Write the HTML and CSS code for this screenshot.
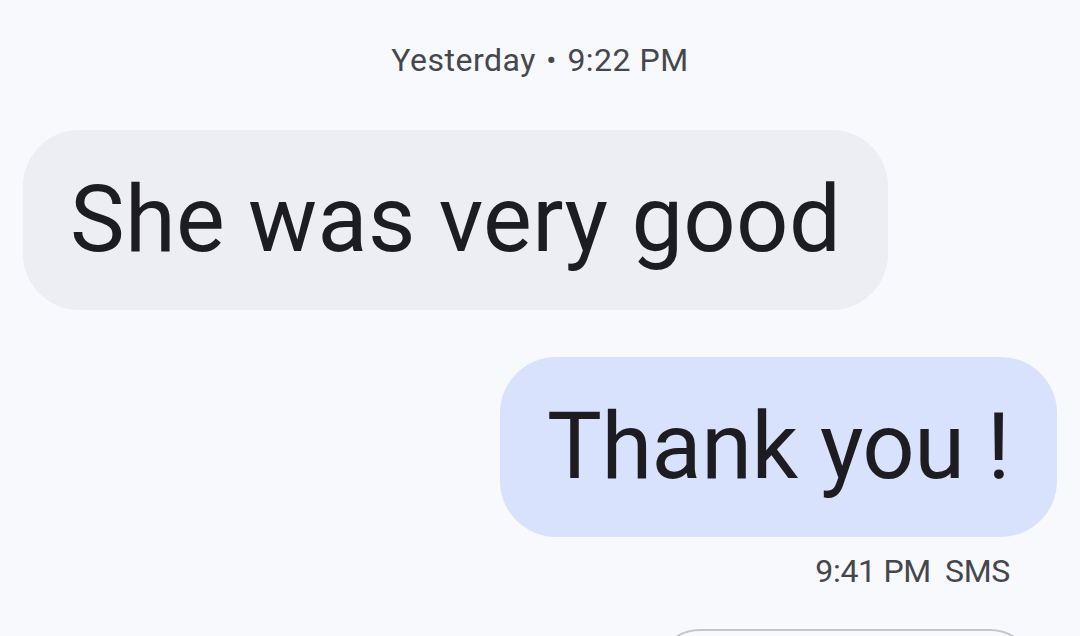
FILE: index.html
```html
<!DOCTYPE html>
<html lang="en">
<head>
  <meta charset="UTF-8">
  <meta name="viewport" content="width=device-width, initial-scale=1.0">
  <title>Messages</title>
  <link rel="stylesheet" href="styles.css">
</head>
<body>
  <div class="thread">
    <div class="day-stamp">Yesterday <span class="dot">•</span> 9:22 PM</div>

    <div class="msg incoming">
      <div class="bubble">She was very good</div>
    </div>

    <div class="msg outgoing">
      <div class="bubble">Thank you !</div>
      <div class="meta"><span>9:41 PM</span><span>SMS</span></div>
    </div>

    <div class="suggestions">
      <div class="chip"></div>
    </div>
  </div>
</body>
</html>
```

FILE: styles.css
```css
* {
  box-sizing: border-box;
}
html, body {
  height: 100%;
}
body {
  margin: 0;
  background-color: #f8f9fd;
  font-family: Roboto, 'Noto Sans', sans-serif;
  color: #1c1c21;
  overflow: hidden;
}
.thread {
  display: flex;
  flex-direction: column;
  padding: 38px 23px 0;
}
.day-stamp {
  text-align: center;
  font-size: 32px;
  line-height: 44px;
  color: #45474d;
  letter-spacing: 0.5px;
}
.day-stamp .dot {
  font-size: 30px;
  margin: 0 2px;
}
.msg {
  display: flex;
  flex-direction: column;
}
.incoming {
  align-items: flex-start;
  margin-top: 47px;
}
.outgoing {
  align-items: flex-end;
  margin-top: 47px;
}
.bubble {
  font-size: 92px;
  line-height: 112px;
  padding: 34px 47px;
  border-radius: 56px;
}
.incoming .bubble {
  background-color: #eceef4;
  letter-spacing: 0.3px;
}
.outgoing .bubble {
  background-color: #d9e2fd;
  letter-spacing: -0.5px;
}
.meta {
  display: flex;
  gap: 14px;
  margin-top: 14px;
  padding-right: 47px;
  font-size: 32px;
  line-height: 40px;
  color: #45474d;
  letter-spacing: -0.3px;
}
.suggestions {
  display: flex;
  justify-content: flex-end;
  margin-top: 38px;
  padding-right: 22px;
}
.chip {
  width: 380px;
  height: 90px;
  border: 2px solid #c4c6cc;
  border-radius: 45px;
}
```
